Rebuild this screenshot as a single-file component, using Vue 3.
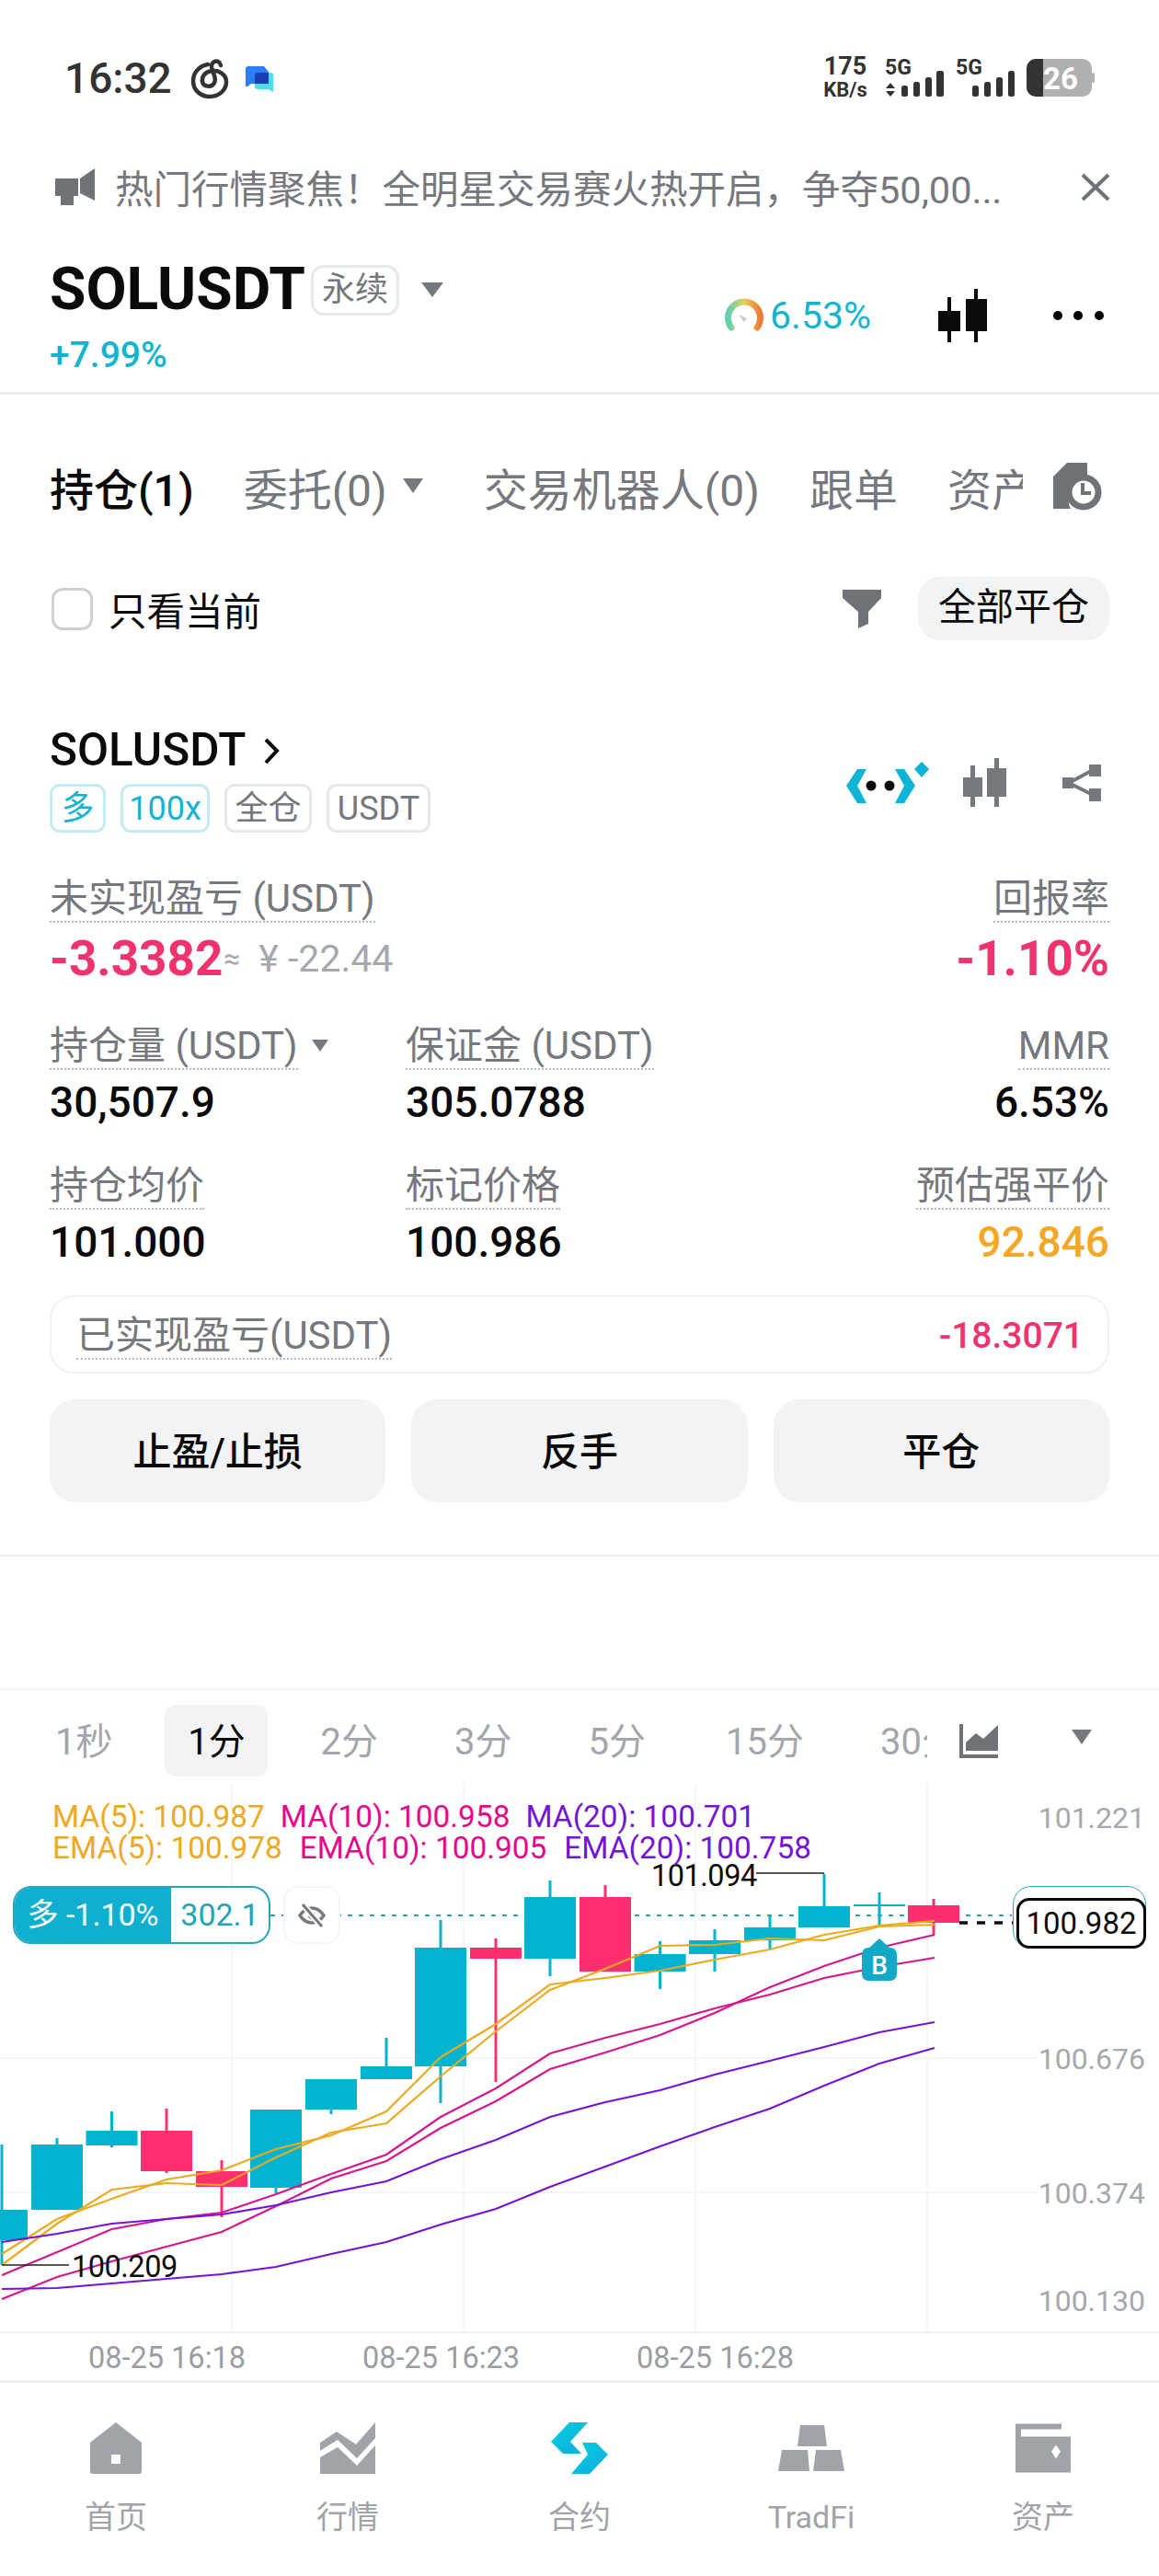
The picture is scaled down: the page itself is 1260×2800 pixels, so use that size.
<script setup>
const TEAL = '#00b4d0'
const PINK = '#ff2e6e'
const raw = [
  [2, 2402, 2435, 2331, 2462, 0],
  [62, 2331, 2402, 2324, 2402, 0],
  [121.5, 2316, 2332, 2295, 2334, 0],
  [181, 2316, 2360, 2292, 2362, 1],
  [241, 2360, 2377, 2348, 2410, 1],
  [300, 2293, 2378, 2293, 2384, 0],
  [360, 2260, 2293, 2260, 2298, 0],
  [420, 2246, 2260, 2215, 2260, 0],
  [479, 2117, 2246, 2087, 2286, 0],
  [539, 2117, 2129, 2107, 2263, 1],
  [598, 2062, 2129, 2044, 2148, 0],
  [658, 2062, 2143, 2049, 2143, 1],
  [717.6, 2124, 2143, 2110, 2162, 0],
  [777, 2109, 2124, 2097, 2143, 0],
  [837, 2095, 2109, 2082, 2120, 0],
  [896, 2072, 2095, 2037, 2095, 0],
  [956, 2070, 2072, 2057, 2093, 0],
  [1015, 2071, 2090, 2064, 2103, 1]
]
const candles = raw.map(([x, top, bottom, hi, lo, down]) => ({
  x, top, h: bottom - top, hi, lo, color: down ? PINK : TEAL
}))
const xs = [2, 62, 121.5, 181, 241, 300, 360, 420, 479, 539, 598, 658, 717.6, 777, 837, 896, 956, 1016]
const toPoints = ys => ys.map((y, i) => `${xs[i]},${y}`).join(' ')
const lines = [
  { c: '#eda91f', p: toPoints([2450, 2412, 2390, 2369, 2359, 2336, 2321, 2295, 2236, 2200, 2157, 2150, 2142, 2130, 2119, 2103, 2093, 2088]) },
  { c: '#eda91f', p: toPoints([2462, 2417, 2380, 2373, 2375, 2345, 2318, 2308, 2257, 2208, 2163, 2140, 2115, 2114, 2107, 2109, 2094, 2092]) },
  { c: '#d5168c', p: toPoints([2473, 2448, 2423, 2412, 2405, 2385, 2363, 2342, 2301, 2270, 2232, 2215, 2200, 2183, 2168, 2150, 2138, 2128]) },
  { c: '#d5168c', p: toPoints([2499, 2475, 2458, 2442, 2426, 2398, 2368, 2349, 2313, 2284, 2249, 2231, 2212, 2188, 2160, 2137, 2117, 2103]) },
  { c: '#7414d6', p: toPoints([2437, 2428, 2417, 2412, 2407, 2397, 2383, 2371, 2347, 2326, 2301, 2285, 2272, 2255, 2240, 2225, 2209, 2198]) },
  { c: '#7414d6', p: toPoints([2488, 2487, 2482, 2477, 2472, 2464, 2450, 2437, 2418, 2401, 2377, 2355, 2333, 2312, 2292, 2267, 2243, 2226]) }
]
const gridX = [252, 504, 756, 1008]
const gridY = [2237, 2383]
const axis = [
  { y: 1987, t: '101.221' },
  { y: 2249, t: '100.676' },
  { y: 2395, t: '100.374' },
  { y: 2512, t: '100.130' }
]
const periods = ['1秒', '1分', '2分', '3分', '5分', '15分', '30分']
const times = ['08-25 16:18', '08-25 16:23', '08-25 16:28']
</script>

<template>
  <div class="page">
    <div class="status">
      <span class="clock">16:32</span>
      <svg class="swirl" viewBox="205 62 46 46" width="46" height="46">
        <path d="M226 70C216 72 210 79 210 88C210 98 218 105 228 105C238 105 246 98 246 89C246 81 238 76 230 77C223 78 219 83 220 89C221 94 230 96 233 90C236 84 231 80 230 73C229 67 238 63 240 71" fill="none" stroke="#333" stroke-width="4.5" stroke-linecap="round"/>
      </svg>
      <svg class="chat" viewBox="263 65 39 40" width="39" height="40">
        <rect x="263" y="65" width="39" height="40" rx="7" fill="#fff"/>
        <path d="M267 75a3 3 0 0 1 3-3h17l5 6v13h-19l-4 3h-2z" fill="#2f7df6"/>
        <path d="M277 82a3 3 0 0 1 3-3h14a3 3 0 0 1 3 3v18l-5-3h-12a3 3 0 0 1-3-3z" fill="#4fdbe8"/>
        <path d="M277 82a3 3 0 0 1 3-3h12v12h-15z" fill="#1a3fb0"/>
      </svg>
      <div class="speed"><b>175</b><b class="unit">KB/s</b></div>
      <svg class="signal" viewBox="960 60 232 50" width="232" height="50">
        <text x="962" y="81" class="net">5G</text>
        <text x="1039" y="81" class="net">5G</text>
        <path d="M968 90l5 6h-10zM968 105l5-6h-10z" fill="#333"/>
        <g fill="#333">
          <rect x="980" y="93" width="7" height="12" rx="2.5"/>
          <rect x="993" y="89" width="7" height="16" rx="2.5"/>
          <rect x="1006" y="84" width="7" height="21" rx="2.5"/>
          <rect x="1018" y="77" width="8" height="28" rx="2.5"/>
          <rect x="1057" y="93" width="7" height="12" rx="2.5"/>
          <rect x="1070" y="89" width="7" height="16" rx="2.5"/>
          <rect x="1083" y="84" width="7" height="21" rx="2.5"/>
          <rect x="1096" y="77" width="7" height="28" rx="2.5"/>
        </g>
        <rect x="1116" y="64" width="71" height="41" rx="10" fill="#b0b0b0"/>
        <path d="M1134 64h-8a10 10 0 0 0-10 10v21a10 10 0 0 0 10 10h8z" fill="#333"/>
        <rect x="1187" y="79" width="3" height="11" rx="1.5" fill="#b0b0b0"/>
        <text x="1134" y="97" class="batt">26</text>
      </svg>
    </div>

    <div class="notice">
      <svg viewBox="60 183 43 40" width="43" height="40">
        <path d="M60 194h25v19h-5v10H66v-10h-6zM87 194l16-11v35l-16-8z" fill="#6f7378"/>
      </svg>
      <span class="notice-text">热门行情聚焦！全明星交易赛火热开启，争夺50,00...</span>
      <svg class="close" viewBox="1175 188 32 31" width="32" height="31">
        <path d="M1177 190l28 27M1205 190l-28 27" stroke="#6f7378" stroke-width="4" fill="none"/>
      </svg>
    </div>

    <div class="header">
      <div class="head-left">
        <div class="title-row">
          <span class="symbol">SOLUSDT</span>
          <span class="perp">永续</span>
          <i class="tri tri-title"></i>
        </div>
        <div class="change">+7.99%</div>
      </div>
      <div class="head-right">
        <svg viewBox="786 323 46 40" width="46" height="40">
          <defs>
            <linearGradient id="gauge" x1="0" y1="0" x2="1" y2="0">
              <stop offset="0" stop-color="#5fd0b0"/>
              <stop offset="0.5" stop-color="#e8cf5e"/>
              <stop offset="1" stop-color="#ee7a36"/>
            </linearGradient>
          </defs>
          <path d="M795 356A17.5 17.5 0 1 1 823 356" fill="none" stroke="url(#gauge)" stroke-width="7" stroke-linecap="round"/>
          <path d="M803 342l9 4-3 4z" fill="#c9cbce"/>
        </svg>
        <span class="ratio">6.53%</span>
        <svg class="kline" viewBox="1020 314 53 58" width="53" height="58">
          <path d="M1020 338h24v22h-24zM1030 323h4v49h-4zM1050 325h23v35h-23zM1059 314h4v58h-4z" fill="#0a0a0a"/>
        </svg>
        <svg class="more" viewBox="1144 336 58 14" width="58" height="14">
          <circle cx="1150" cy="343" r="5"/>
          <circle cx="1172" cy="343" r="5"/>
          <circle cx="1195" cy="343" r="5"/>
        </svg>
      </div>
    </div>

    <div class="tabs">
      <span class="tab active">持仓(1)</span>
      <span class="tab tab-drop">委托(0)<i class="tri tri-tab"></i></span>
      <span class="tab">交易机器人(0)</span>
      <span class="tab">跟单</span>
      <span class="tab tab-clip">资产</span>
      <svg class="history" viewBox="1145 503 55 52" width="55" height="52">
        <path d="M1160 503h22v18a22 22 0 0 0-18 32h-19v-35z" fill="#6f7378"/>
        <circle cx="1178" cy="535" r="16" fill="#fff" stroke="#6f7378" stroke-width="7"/>
        <path d="M1177 525v11h9" fill="none" stroke="#6f7378" stroke-width="4"/>
      </svg>
    </div>

    <div class="filter-row">
      <i class="check"></i>
      <span class="only">只看当前</span>
      <svg class="funnel" viewBox="916 641 42 42" width="42" height="42">
        <path d="M916 641h42v9l-14 15v13l-11 5v-18l-17-15z" fill="#6f7378"/>
      </svg>
      <span class="close-all">全部平仓</span>
    </div>

    <div class="position">
      <div class="pos-top">
        <div>
          <div class="pos-head">
            <span class="pos-symbol">SOLUSDT</span>
            <svg class="chev" viewBox="286 801 19 29" width="19" height="29">
              <path d="M289 803l12 12-12 13" fill="none" stroke="#0a0a0a" stroke-width="4"/>
            </svg>
          </div>
          <div class="tags">
            <span class="tag tag-teal tag-long">多</span>
            <span class="tag tag-teal tag-lev">100x</span>
            <span class="tag tag-cross">全仓</span>
            <span class="tag tag-unit">USDT</span>
          </div>
        </div>
        <div class="pos-icons">
          <svg viewBox="918 825 94 49" width="94" height="49">
            <path d="M920 853l12-18h10l-10 18 10 19h-10zM995 853l-12-18h-10l10 18-10 19h10z" fill="#0fb4d4"/>
            <circle cx="947" cy="853" r="5.5" fill="#0a0a0a"/>
            <circle cx="967" cy="853" r="5.5" fill="#0a0a0a"/>
            <path d="M1002 827l8 8-8 9-8-9z" fill="#0fb4d4"/>
          </svg>
          <svg class="small-k" viewBox="1047 824 48 53" width="48" height="53">
            <path d="M1047 845h21v21h-21zM1055 832h5v45h-5zM1073 835h21v31h-21zM1081 824h5v53h-5z" fill="#75787d"/>
          </svg>
          <svg class="share" viewBox="1155 829 42 40" width="42" height="40">
            <path d="M1155 843h12v12h-12zM1184 829h13v13h-13zM1184 855h13v14h-13z" fill="#75787d"/>
            <path d="M1162 849l26-14M1162 849l26 13" stroke="#75787d" stroke-width="4" fill="none"/>
          </svg>
        </div>
      </div>

      <div class="pnl-grid">
        <div>
          <span class="label">未实现盈亏 (USDT)</span>
          <div class="pnl-value">
            <span class="pnl-main">-3.3382</span><span class="approx">≈</span><span class="cny">¥ -22.44</span>
          </div>
        </div>
        <div class="right">
          <span class="label">回报率</span>
          <div class="pnl-value pnl-end"><span class="pnl-main">-1.10%</span></div>
        </div>
      </div>

      <div class="metric-grid metric-first">
        <div class="metric-cell">
          <span class="label">持仓量 (USDT)</span><i class="tri tri-label"></i>
          <div class="val">30,507.9</div>
        </div>
        <div class="metric-cell">
          <span class="label">保证金 (USDT)</span>
          <div class="val">305.0788</div>
        </div>
        <div class="right">
          <span class="label">MMR</span>
          <div class="val">6.53%</div>
        </div>
      </div>

      <div class="metric-grid">
        <div class="metric-cell">
          <span class="label">持仓均价</span>
          <div class="val">101.000</div>
        </div>
        <div class="metric-cell">
          <span class="label">标记价格</span>
          <div class="val">100.986</div>
        </div>
        <div class="right">
          <span class="label">预估强平价</span>
          <div class="val val-warn">92.846</div>
        </div>
      </div>

      <div class="realized">
        <span class="label realized-label">已实现盈亏(USDT)</span>
        <span class="realized-val">-18.3071</span>
      </div>

      <div class="actions">
        <span class="action">止盈/止损</span>
        <span class="action">反手</span>
        <span class="action">平仓</span>
      </div>
    </div>

    <div class="divider-a"></div>
    <div class="divider-b"></div>

    <div class="periods">
      <div class="period-list">
        <span v-for="(p, i) in periods" :key="p" class="period" :class="{ current: i === 1 }">{{ p }}</span>
      </div>
      <svg class="area" viewBox="1043 1875 42 37" width="42" height="37">
        <path d="M1043 1875h4v33h38v4h-42z" fill="#6f7378"/>
        <path d="M1050 1904v-9l11-10 8 6 16-15v28z" fill="#6f7378"/>
      </svg>
      <i class="tri tri-period"></i>
    </div>

    <div class="chart">
      <svg class="plot" viewBox="0 1940 1260 596" width="1260" height="596">
        <line v-for="x in gridX" :key="x" :x1="x" :x2="x" y1="1940" y2="2536" stroke="#f5f6f7" stroke-width="2"/>
        <line v-for="y in gridY" :key="y" x1="0" x2="1128" :y1="y" :y2="y" stroke="#f5f6f7" stroke-width="2"/>
        <line x1="0" x2="1260" y1="2535" y2="2535" stroke="#eff0f1" stroke-width="2"/>
        <line x1="294" x2="1100" y1="2082" y2="2082" stroke="#2aa5b8" stroke-width="2" stroke-dasharray="5 7"/>
        <g v-for="c in candles" :key="c.x">
          <line :x1="c.x" :x2="c.x" :y1="c.hi" :y2="c.lo" :stroke="c.color" stroke-width="3"/>
          <rect :x="c.x - 28" :y="c.top" width="56" :height="c.h" :fill="c.color"/>
        </g>
        <polyline v-for="(l, i) in lines" :key="i" :points="l.p" fill="none" :stroke="l.c" stroke-width="2.2"/>
        <line x1="1043" x2="1103" y1="2090" y2="2090" stroke="#0a0a0a" stroke-width="3.5" stroke-dasharray="9 10"/>
        <path d="M822 2036h74M2 2462h73" fill="none" stroke="#222" stroke-width="1.5"/>
        <text x="708" y="2050" class="extreme">101.094</text>
        <text x="78" y="2475" class="extreme">100.209</text>
        <text v-for="a in axis" :key="a.t" x="1245" :y="a.y" class="axis">{{ a.t }}</text>
        <path d="M945 2117l11-10 11 10h1a7 7 0 0 1 7 7v22a7 7 0 0 1-7 7h-24a7 7 0 0 1-7-7v-22a7 7 0 0 1 7-7z" fill="#13a9c6"/>
        <text x="956" y="2146" class="bmark">B</text>
      </svg>

      <div class="legend">
        <div class="legend-row legend-ma">
          <span class="c-orange">MA(5): 100.987</span>
          <span class="c-pink">MA(10): 100.958</span>
          <span class="c-purple">MA(20): 100.701</span>
        </div>
        <div class="legend-row legend-ema">
          <span class="c-orange">EMA(5): 100.978</span>
          <span class="c-pink">EMA(10): 100.905</span>
          <span class="c-purple">EMA(20): 100.758</span>
        </div>
      </div>

      <div class="order">
        <span class="order-side">多 -1.10%</span>
        <span class="order-qty">302.1</span>
      </div>
      <div class="eye">
        <svg viewBox="0 0 30 30" width="30" height="30">
          <path d="M2 15c4-6 8-8 13-8s9 2 13 8c-4 6-8 8-13 8s-9-2-13-8z" fill="none" stroke="#75787d" stroke-width="3.5"/>
          <circle cx="15" cy="15" r="4" fill="#75787d"/>
          <path d="M5 3l21 24" stroke="#fff" stroke-width="7"/>
          <path d="M5 3l21 24" stroke="#75787d" stroke-width="3"/>
        </svg>
      </div>
      <div class="price-back"></div>
      <div class="price-tag">100.982</div>
    </div>

    <div class="time-axis">
      <span v-for="t in times" :key="t" class="time">{{ t }}</span>
    </div>

    <nav class="nav">
      <div class="nav-item">
        <svg viewBox="98 2633 56 57" width="56" height="57">
          <path d="M126 2633l28 22v31a3 3 0 0 1-3 3h-50a3 3 0 0 1-3-3v-31z" fill="#a0a3a8"/>
          <rect x="121" y="2668" width="10" height="10" fill="#fff"/>
        </svg>
        <span>首页</span>
      </div>
      <div class="nav-item">
        <svg viewBox="348 2633 60 57" width="60" height="57">
          <path d="M348 2655l18-12 21 14 21-24v17l-20 22-21-20-19 12zM348 2671l19-11 21 20 20-22v31h-60z" fill="#a0a3a8"/>
        </svg>
        <span>行情</span>
      </div>
      <div class="nav-item">
        <svg viewBox="600 2633 64 57" width="64" height="57">
          <defs>
            <linearGradient id="swap" x1="0" y1="0" x2="1" y2="1">
              <stop offset="0" stop-color="#00d2dc"/>
              <stop offset="1" stop-color="#13a8e0"/>
            </linearGradient>
          </defs>
          <path d="M621 2633h20l-19 21 12 13h-20l-13-13z" fill="url(#swap)"/>
          <path d="M635 2655h15l13 13-20 21h-20l18-21z" fill="url(#swap)"/>
        </svg>
        <span>合约</span>
      </div>
      <div class="nav-item">
        <svg viewBox="846 2636 72 51" width="72" height="51">
          <path d="M870 2636h26l3 23h-32zM850 2663h28l2 23h-34zM887 2663h27l4 23h-34z" fill="#a0a3a8"/>
        </svg>
        <span>TradFi</span>
      </div>
      <div class="nav-item">
        <svg viewBox="1104 2636 60 54" width="60" height="54">
          <path d="M1104 2636h50v6h-44v8h54v39h-60z" fill="#a0a3a8"/>
          <path d="M1148 2659l5 7-5 8-5-8z" fill="#fff"/>
        </svg>
        <span>资产</span>
      </div>
    </nav>
  </div>
</template>

<style>
html, body { margin: 0; background: #fff; }
</style>

<style scoped>
.page {
  width: 1260px;
  height: 2800px;
  overflow: hidden;
  background: #fff;
  color: #0a0a0a;
  font-family: Roboto, "Noto Sans CJK SC", "Noto Sans", sans-serif;
}
svg { display: block; flex: none; }
i { display: block; }
.tri {
  width: 0;
  height: 0;
  border-style: solid;
  border-color: #75787d transparent transparent;
}

/* status bar */
.status { height: 170px; display: flex; align-items: center; padding-left: 70px; box-sizing: border-box; }
.clock { font-size: 46px; font-weight: 500; color: #333; width: 135px; flex: none; }
.chat { margin-left: 12px; }
.speed { margin-left: 586px; width: 62px; flex: none; display: flex; flex-direction: column; align-items: center; line-height: 26px; color: #333; font-size: 27px; }
.speed .unit { font-size: 22px; }
.signal { margin-left: 10px; }
.net { font: 700 23px Roboto, sans-serif; fill: #333; }
.batt { font: 700 33px Roboto, sans-serif; fill: #fff; }

/* notice */
.notice { height: 66px; display: flex; align-items: center; padding: 0 53px 0 60px; }
.notice-text { margin-left: 22px; font-size: 41.5px; color: #75787d; white-space: nowrap; width: 1000px; }
.close { margin-left: auto; }

/* header */
.header { height: 193px; box-sizing: border-box; border-bottom: 3px solid #edeef0; padding: 50px 54px 0; display: flex; justify-content: space-between; }
.title-row { height: 58px; display: flex; align-items: center; }
.symbol { font-size: 64px; font-weight: 700; line-height: 58px; }
.perp { margin-left: 6px; height: 55px; width: 96px; flex: none; box-sizing: border-box; border: 3px solid #e6e8ea; border-radius: 14px; font-size: 36px; line-height: 48px; color: #75787d; text-align: center; }
.tri-title { margin-left: 24px; border-width: 16px 12px 0; }
.change { margin-top: 20px; height: 44px; line-height: 44px; font-size: 39px; font-weight: 500; color: #12b4ce; }
.head-right { display: flex; align-items: center; height: 60px; margin-top: 27px; margin-right: 4px; }
.ratio { margin-left: 5px; font-size: 41px; font-weight: 400; color: #12b4ce; }
.kline { margin-left: 73px; }
.more { margin-left: 71px; }

/* tabs */
.tabs { margin-top: 49px; height: 104px; box-sizing: border-box; padding: 0 0 2px 54px; display: flex; align-items: center; gap: 54px; }
.tab { flex: none; font-size: 48px; color: #75787d; white-space: nowrap; display: flex; align-items: center; }
.tab.active { color: #0a0a0a; font-weight: 500; }
.tab-drop { margin-right: 12px; }
.tri-tab { margin-left: 17px; margin-top: -2px; border-width: 16px 11px 0; }
.tab-clip { width: 82px; overflow: hidden; }
.history { margin-left: -21px; }

/* filter */
.filter-row { margin-top: 45px; height: 69px; display: flex; align-items: center; padding: 0 54px; }
.check { width: 45px; height: 46px; box-sizing: border-box; border: 3px solid #cfd0d2; border-radius: 12px; margin-left: 2px; }
.only { margin-left: 17px; font-size: 41.5px; color: #0a0a0a; }
.funnel { margin-left: auto; margin-right: 40px; }
.close-all { width: 208px; height: 69px; line-height: 67px; border-radius: 24px; background: #f1f3f5; text-align: center; font-size: 41px; }

/* position */
.position { margin-top: 95px; padding: 0 54px; }
.pos-top { display: flex; justify-content: space-between; }
.pos-head { height: 48px; display: flex; align-items: center; }
.pos-symbol { font-size: 49.5px; font-weight: 500; line-height: 48px; width: 211px; flex: none; white-space: nowrap; }
.chev { margin-left: 21px; margin-top: 2px; }
.pos-icons { height: 53px; margin-top: 33px; margin-right: 9px; display: flex; align-items: center; }
.small-k { margin-left: 35px; }
.share { margin-left: 60px; }
.tags { margin-top: 13px; height: 53px; display: flex; gap: 16px; }
.tag { box-sizing: border-box; height: 53px; border: 3px solid #e6e8ea; border-radius: 11px; font-size: 36px; line-height: 48px; text-align: center; color: #75787d; }
.tag-teal { border-color: #c3ebf1; color: #12b4ce; }
.tag-long { width: 61px; }
.tag-lev { width: 97px; }
.tag-cross { width: 95px; }
.tag-unit { width: 113px; }

.label { display: inline-block; box-sizing: border-box; height: 50px; line-height: 47px; font-size: 42px; color: #75787d; border-bottom: 2px dotted #b9bbbe; white-space: nowrap; vertical-align: top; }
.pnl-grid { margin-top: 48px; display: flex; justify-content: space-between; }
.right { text-align: right; }
.pnl-value { margin-top: 9px; height: 60px; display: flex; align-items: center; }
.pnl-end { justify-content: flex-end; }
.pnl-main { font-size: 53px; font-weight: 700; color: #f0336f; }
.approx { font-size: 32px; color: #a5a8ac; margin-left: 1px; }
.cny { margin-left: 20px; font-size: 41px; color: #a5a8ac; }

.metric-grid { margin-top: 41px; display: grid; grid-template-columns: 387px 1fr auto; }
.metric-cell { min-width: 0; white-space: nowrap; }
.tri-label { display: inline-block; vertical-align: top; margin: 17px 0 0 15px; border-width: 13px 9px 0; }
.val { margin-top: 9px; height: 52px; line-height: 52px; font-size: 46px; font-weight: 500; color: #0a0a0a; }
.val-warn { color: #f5a623; }

.realized { margin-top: 32px; height: 85px; box-sizing: border-box; border: 2px solid #f0f1f2; border-radius: 26px; padding: 0 26px 0 27px; display: flex; align-items: center; justify-content: space-between; }
.realized-label { margin-top: 5px; }
.realized-val { font-size: 39px; font-weight: 500; color: #f0336f; margin-top: 2px; }

.actions { margin-top: 28px; display: grid; grid-template-columns: repeat(3, 1fr); gap: 28px; }
.action { height: 112px; line-height: 115px; border-radius: 28px; background: #f1f3f5; text-align: center; font-size: 42px; font-weight: 500; }

.divider-a { margin-top: 57px; height: 2px; background: #eceef0; }
.divider-b { margin-top: 143px; height: 2px; background: #f2f3f4; }

/* periods */
.periods { margin-top: 16px; height: 78px; display: flex; align-items: center; }
.period-list { width: 1008px; overflow: hidden; flex: none; display: flex; align-items: center; padding-left: 60px; box-sizing: border-box; }
.period { flex: none; height: 78px; font-size: 40px; color: #a3a6aa; white-space: nowrap; margin-right: 83px; line-height: 82px; }
.period.current { color: #0a0a0a; background: #f1f3f5; border-radius: 12px; width: 112px; text-align: center; margin-right: 57px; }
.period:first-child { margin-right: 57px; }
.period:nth-child(5) { margin-right: 87px; }
.area { margin-left: 35px; }
.tri-period { margin-left: 80px; margin-top: -8px; border-width: 16px 11px 0; }

/* chart */
.chart { margin-top: 9px; height: 596px; position: relative; overflow: hidden; }
.plot { position: absolute; left: 0; top: 0; }
.extreme { font: 400 32.5px Roboto, sans-serif; letter-spacing: -.5px; fill: #0a0a0a; }
.axis { font: 400 32px Roboto, sans-serif; fill: #a5a8ac; text-anchor: end; }
.bmark { font: 500 28px Roboto, sans-serif; fill: #fff; text-anchor: middle; }
.legend { position: absolute; left: 57px; top: 18px; font-size: 33.4px; line-height: 33px; }
.legend-row { display: flex; white-space: nowrap; }
.legend-ma { gap: 17px; }
.legend-ema { gap: 19px; margin-top: 1px; }
.c-orange { color: #eda91f; }
.c-pink { color: #e3098b; }
.c-purple { color: #7414d6; }
.order { position: absolute; left: 14px; top: 110px; width: 280px; height: 63px; box-sizing: border-box; border: 2px solid #2aa5b8; border-radius: 20px; overflow: hidden; display: flex; background: #fff; }
.order-side { width: 170px; background: #0fb0cf; color: #fff; font-size: 34px; line-height: 59px; text-align: center; }
.order-qty { flex: 1; color: #1fa5b8; font-size: 34px; line-height: 59px; text-align: center; }
.eye { position: absolute; left: 308px; top: 110px; width: 62px; height: 63px; box-sizing: border-box; border: 2px solid #f6f6f7; border-radius: 16px; background: #fff; display: flex; align-items: center; justify-content: center; }
.price-back { position: absolute; left: 1101px; top: 110px; width: 145px; height: 68px; box-sizing: border-box; border: 1.5px solid #2aa5b8; border-radius: 20px; background: #fff; }
.price-tag { position: absolute; left: 1105px; top: 123px; width: 141px; height: 55px; box-sizing: border-box; border: 3px solid #0a0a0a; border-radius: 14px; background: #fff; font-size: 33px; line-height: 49px; text-align: center; color: #0a0a0a; }

/* time axis */
.time-axis { height: 54px; box-sizing: border-box; border-bottom: 3px solid #eeeff0; padding-left: 96px; display: flex; gap: 127px; }
.time { flex: none; font-size: 32.5px; line-height: 54px; color: #9a9da1; }

/* nav */
.nav { margin-top: 43px; display: grid; grid-template-columns: repeat(5, 252px); }
.nav-item { display: flex; flex-direction: column; align-items: center; font-size: 34px; color: #a0a3a8; }
.nav-item svg { height: 57px; }
.nav-item span { margin-top: 26px; line-height: 40px; }
</style>
